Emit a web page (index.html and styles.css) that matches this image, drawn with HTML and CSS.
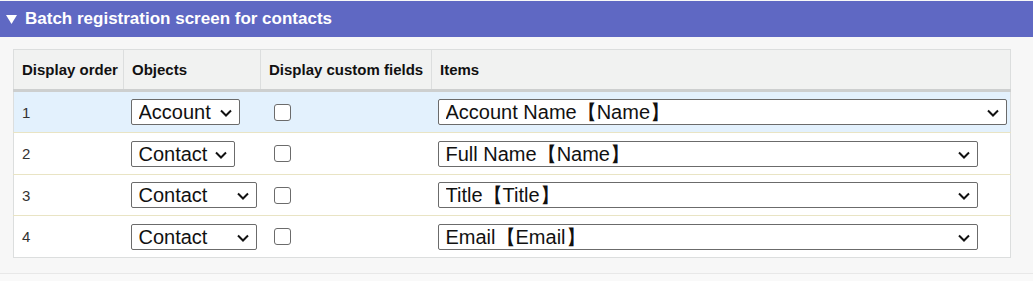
FILE: index.html
```html
<!DOCTYPE html>
<html lang="en">

<head>
    <meta charset="UTF-8" />
    <title>Batch registration screen for contacts</title>
    <link rel="stylesheet" href="styles.css">
</head>

<body>
    <div class="section-header">
        <svg class="toggle" width="11" height="9" viewBox="0 0 11 9"><path d="M0 0H11L5.5 9Z" fill="#fff"/></svg>
        <span class="section-title">Batch registration screen for contacts</span>
    </div>

    <div class="section-body">
        <table class="order-table">
            <colgroup>
                <col class="col-order">
                <col class="col-object">
                <col class="col-custom">
                <col>
            </colgroup>
            <thead>
                <tr>
                    <th>Display order</th>
                    <th>Objects</th>
                    <th>Display custom fields</th>
                    <th>Items</th>
                </tr>
            </thead>
            <tbody>
                <tr class="selected">
                    <td>1</td>
                    <td>
                        <span class="select-wrap">
                            <select class="object-select account">
                                <option>Account</option>
                                <option>Contact</option>
                            </select>
                            <svg class="chevron" width="12" height="8" viewBox="0 0 12 8"><path d="M1 1.5L6 6.5L11 1.5" fill="none" stroke="#111" stroke-width="2"/></svg>
                        </span>
                    </td>
                    <td><input type="checkbox" class="custom-check"></td>
                    <td>
                        <span class="select-wrap">
                            <select class="item-select wide">
                                <option>Account Name【Name】</option>
                            </select>
                            <svg class="chevron" width="12" height="8" viewBox="0 0 12 8"><path d="M1 1.5L6 6.5L11 1.5" fill="none" stroke="#111" stroke-width="2"/></svg>
                        </span>
                    </td>
                </tr>
                <tr>
                    <td>2</td>
                    <td>
                        <span class="select-wrap">
                            <select class="object-select contact">
                                <option>Contact</option>
                            </select>
                            <svg class="chevron" width="12" height="8" viewBox="0 0 12 8"><path d="M1 1.5L6 6.5L11 1.5" fill="none" stroke="#111" stroke-width="2"/></svg>
                        </span>
                    </td>
                    <td><input type="checkbox" class="custom-check"></td>
                    <td>
                        <span class="select-wrap">
                            <select class="item-select">
                                <option>Full Name【Name】</option>
                            </select>
                            <svg class="chevron" width="12" height="8" viewBox="0 0 12 8"><path d="M1 1.5L6 6.5L11 1.5" fill="none" stroke="#111" stroke-width="2"/></svg>
                        </span>
                    </td>
                </tr>
                <tr>
                    <td>3</td>
                    <td>
                        <span class="select-wrap">
                            <select class="object-select fixed">
                                <option>Contact</option>
                                <option>Account</option>
                            </select>
                            <svg class="chevron" width="12" height="8" viewBox="0 0 12 8"><path d="M1 1.5L6 6.5L11 1.5" fill="none" stroke="#111" stroke-width="2"/></svg>
                        </span>
                    </td>
                    <td><input type="checkbox" class="custom-check"></td>
                    <td>
                        <span class="select-wrap">
                            <select class="item-select">
                                <option>Title【Title】</option>
                            </select>
                            <svg class="chevron" width="12" height="8" viewBox="0 0 12 8"><path d="M1 1.5L6 6.5L11 1.5" fill="none" stroke="#111" stroke-width="2"/></svg>
                        </span>
                    </td>
                </tr>
                <tr>
                    <td>4</td>
                    <td>
                        <span class="select-wrap">
                            <select class="object-select fixed">
                                <option>Contact</option>
                                <option>Account</option>
                            </select>
                            <svg class="chevron" width="12" height="8" viewBox="0 0 12 8"><path d="M1 1.5L6 6.5L11 1.5" fill="none" stroke="#111" stroke-width="2"/></svg>
                        </span>
                    </td>
                    <td><input type="checkbox" class="custom-check"></td>
                    <td>
                        <span class="select-wrap">
                            <select class="item-select">
                                <option>Email【Email】</option>
                            </select>
                            <svg class="chevron" width="12" height="8" viewBox="0 0 12 8"><path d="M1 1.5L6 6.5L11 1.5" fill="none" stroke="#111" stroke-width="2"/></svg>
                        </span>
                    </td>
                </tr>
            </tbody>
        </table>
    </div>

    <div class="section-footer"></div>
</body>

</html>
```

FILE: styles.css
```css
body {
    font-family: 'Liberation Sans', Arial, sans-serif;
    margin: 0;
    background-color: #f7f7f7;
    color: #333;
}

.section-header {
    display: flex;
    align-items: center;
    height: 36px;
    margin-top: 1px;
    padding-left: 6px;
    background-color: #5f68c3;
    color: #ffffff;
}

.toggle {
    margin-right: 8px;
}

.section-title {
    font-size: 17px;
    font-weight: bold;
}

.section-body {
    padding: 12px 22px 15px 13px;
}

.order-table {
    width: 998px;
    table-layout: fixed;
    border-collapse: collapse;
    background-color: #ffffff;
    border: 1px solid #dcdede;
    font-size: 15px;
}

.col-order {
    width: 110px;
}

.col-object {
    width: 137px;
}

.col-custom {
    width: 171px;
}

.order-table th {
    height: 39px;
    padding: 0 6px 0 8px;
    text-align: left;
    font-weight: bold;
    color: #111;
    background-color: #f1f2f1;
    border-left: 1px solid #dcdede;
    border-bottom: 3px solid #cdcfcf;
    white-space: nowrap;
}

.order-table td {
    height: 40px;
    padding: 0 6px 0 8px;
    border-bottom: 1px solid #e9e4c4;
}

.order-table tbody tr:nth-child(even) td {
    height: 41px;
}

.order-table tbody tr:last-child td {
    border-bottom: none;
}

.order-table tr.selected td {
    background-color: #e3f1fd;
}

.select-wrap {
    position: relative;
    display: inline-block;
    vertical-align: middle;
}

.chevron {
    position: absolute;
    right: 8px;
    top: 10px;
    pointer-events: none;
}

.object-select,
.item-select {
    appearance: none;
    display: block;
    font-family: 'Liberation Sans', Arial, sans-serif;
    font-size: 20px;
    height: 26px;
    color: #111;
    background-color: #ffffff;
    border: 1px solid #6b6b6b;
    border-radius: 2px;
    padding: 0 0 0 7px;
}

.object-select {
    margin-left: -1px;
}

.object-select.account {
    width: 109px;
}

.object-select.contact {
    width: 104px;
}

.object-select.fixed {
    width: 126px;
}

.item-select {
    width: 540px;
    margin-left: -2px;
}

.item-select.wide {
    width: 569px;
}

.custom-check {
    appearance: none;
    display: block;
    width: 17px;
    height: 17px;
    margin: 0 0 0 5px;
    border: 1px solid #6b6b6b;
    border-radius: 3px;
    background-color: #ffffff;
}

.section-footer {
    border-top: 1px solid #e8e8e8;
    height: 8px;
    background-color: #f9f9f9;
}
```
